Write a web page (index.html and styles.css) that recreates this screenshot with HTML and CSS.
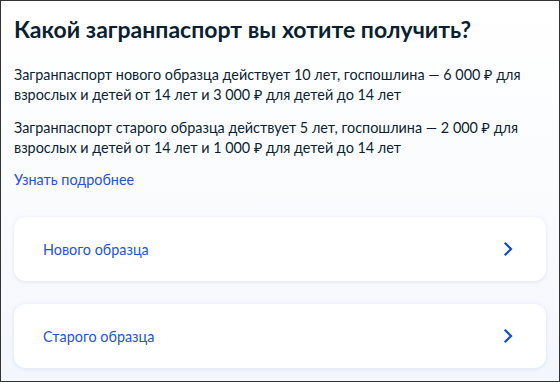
FILE: index.html
```html
<!doctype html>
<html lang="ru">
<head>
	<meta charset="utf-8">
	<title>Загранпаспорт</title>
	<link rel="stylesheet" href="styles.css">
</head>
<body>
	<div class="page">
		<h1 class="title">Какой загранпаспорт вы хотите получить?</h1>

		<p class="text">Загранпаспорт нового образца действует 10 лет, госпошлина — 6&nbsp;000&nbsp;₽ для взрослых и детей от 14 лет и 3&nbsp;000&nbsp;₽ для детей до 14 лет</p>
		<p class="text">Загранпаспорт старого образца действует 5 лет, госпошлина — 2&nbsp;000&nbsp;₽ для взрослых и детей от 14 лет и 1&nbsp;000&nbsp;₽ для детей до 14 лет</p>

		<a class="more" href="#">Узнать подробнее</a>

		<div class="choices">
			<a class="choice" href="#">
				<span>Нового образца</span>
				<svg class="arrow" width="16" height="16" viewBox="0 0 16 16"><path d="M5.5 2.5 L11 8 L5.5 13.5" fill="none" stroke="#0d4cd3" stroke-width="2.2" stroke-linecap="square"/></svg>
			</a>
			<a class="choice" href="#">
				<span>Старого образца</span>
				<svg class="arrow" width="16" height="16" viewBox="0 0 16 16"><path d="M5.5 2.5 L11 8 L5.5 13.5" fill="none" stroke="#0d4cd3" stroke-width="2.2" stroke-linecap="square"/></svg>
			</a>
		</div>
	</div>
</body>
</html>
```
FILE: styles.css
```css
html, body {
	margin: 0;
	height: 100%;
}
body {
	font-family: Lato, "Noto Sans", sans-serif;
	color: #0b1f33;
}
.page {
	box-sizing: border-box;
	height: 382px;
	border: 1px solid #333;
	padding: 14px 13px 0 13px;
	background: linear-gradient(to bottom, #ffffff 0%, #fbfcfe 45%, #f3f6fc 100%);
}
.title {
	margin: 0 0 22px 0;
	font-size: 23px;
	line-height: 28px;
	font-weight: 700;
}
.text {
	margin: 0 0 13px 0;
	font-size: 14.4px;
	line-height: 20px;
}
.more {
	display: block;
	margin-top: -1px;
	font-size: 14.4px;
	line-height: 20px;
	color: #2553d6;
	text-decoration: none;
}
.choices {
	display: flex;
	flex-direction: column;
	gap: 23px;
	margin-top: 27px;
}
.choice {
	display: flex;
	align-items: center;
	justify-content: space-between;
	height: 64px;
	padding: 0 30px 0 29px;
	background: #fff;
	border-radius: 12px;
	box-shadow: 0 1px 4px rgba(86, 120, 180, 0.14);
	font-size: 14.4px;
	color: #2553d6;
	text-decoration: none;
}
.arrow {
	display: block;
}
```
